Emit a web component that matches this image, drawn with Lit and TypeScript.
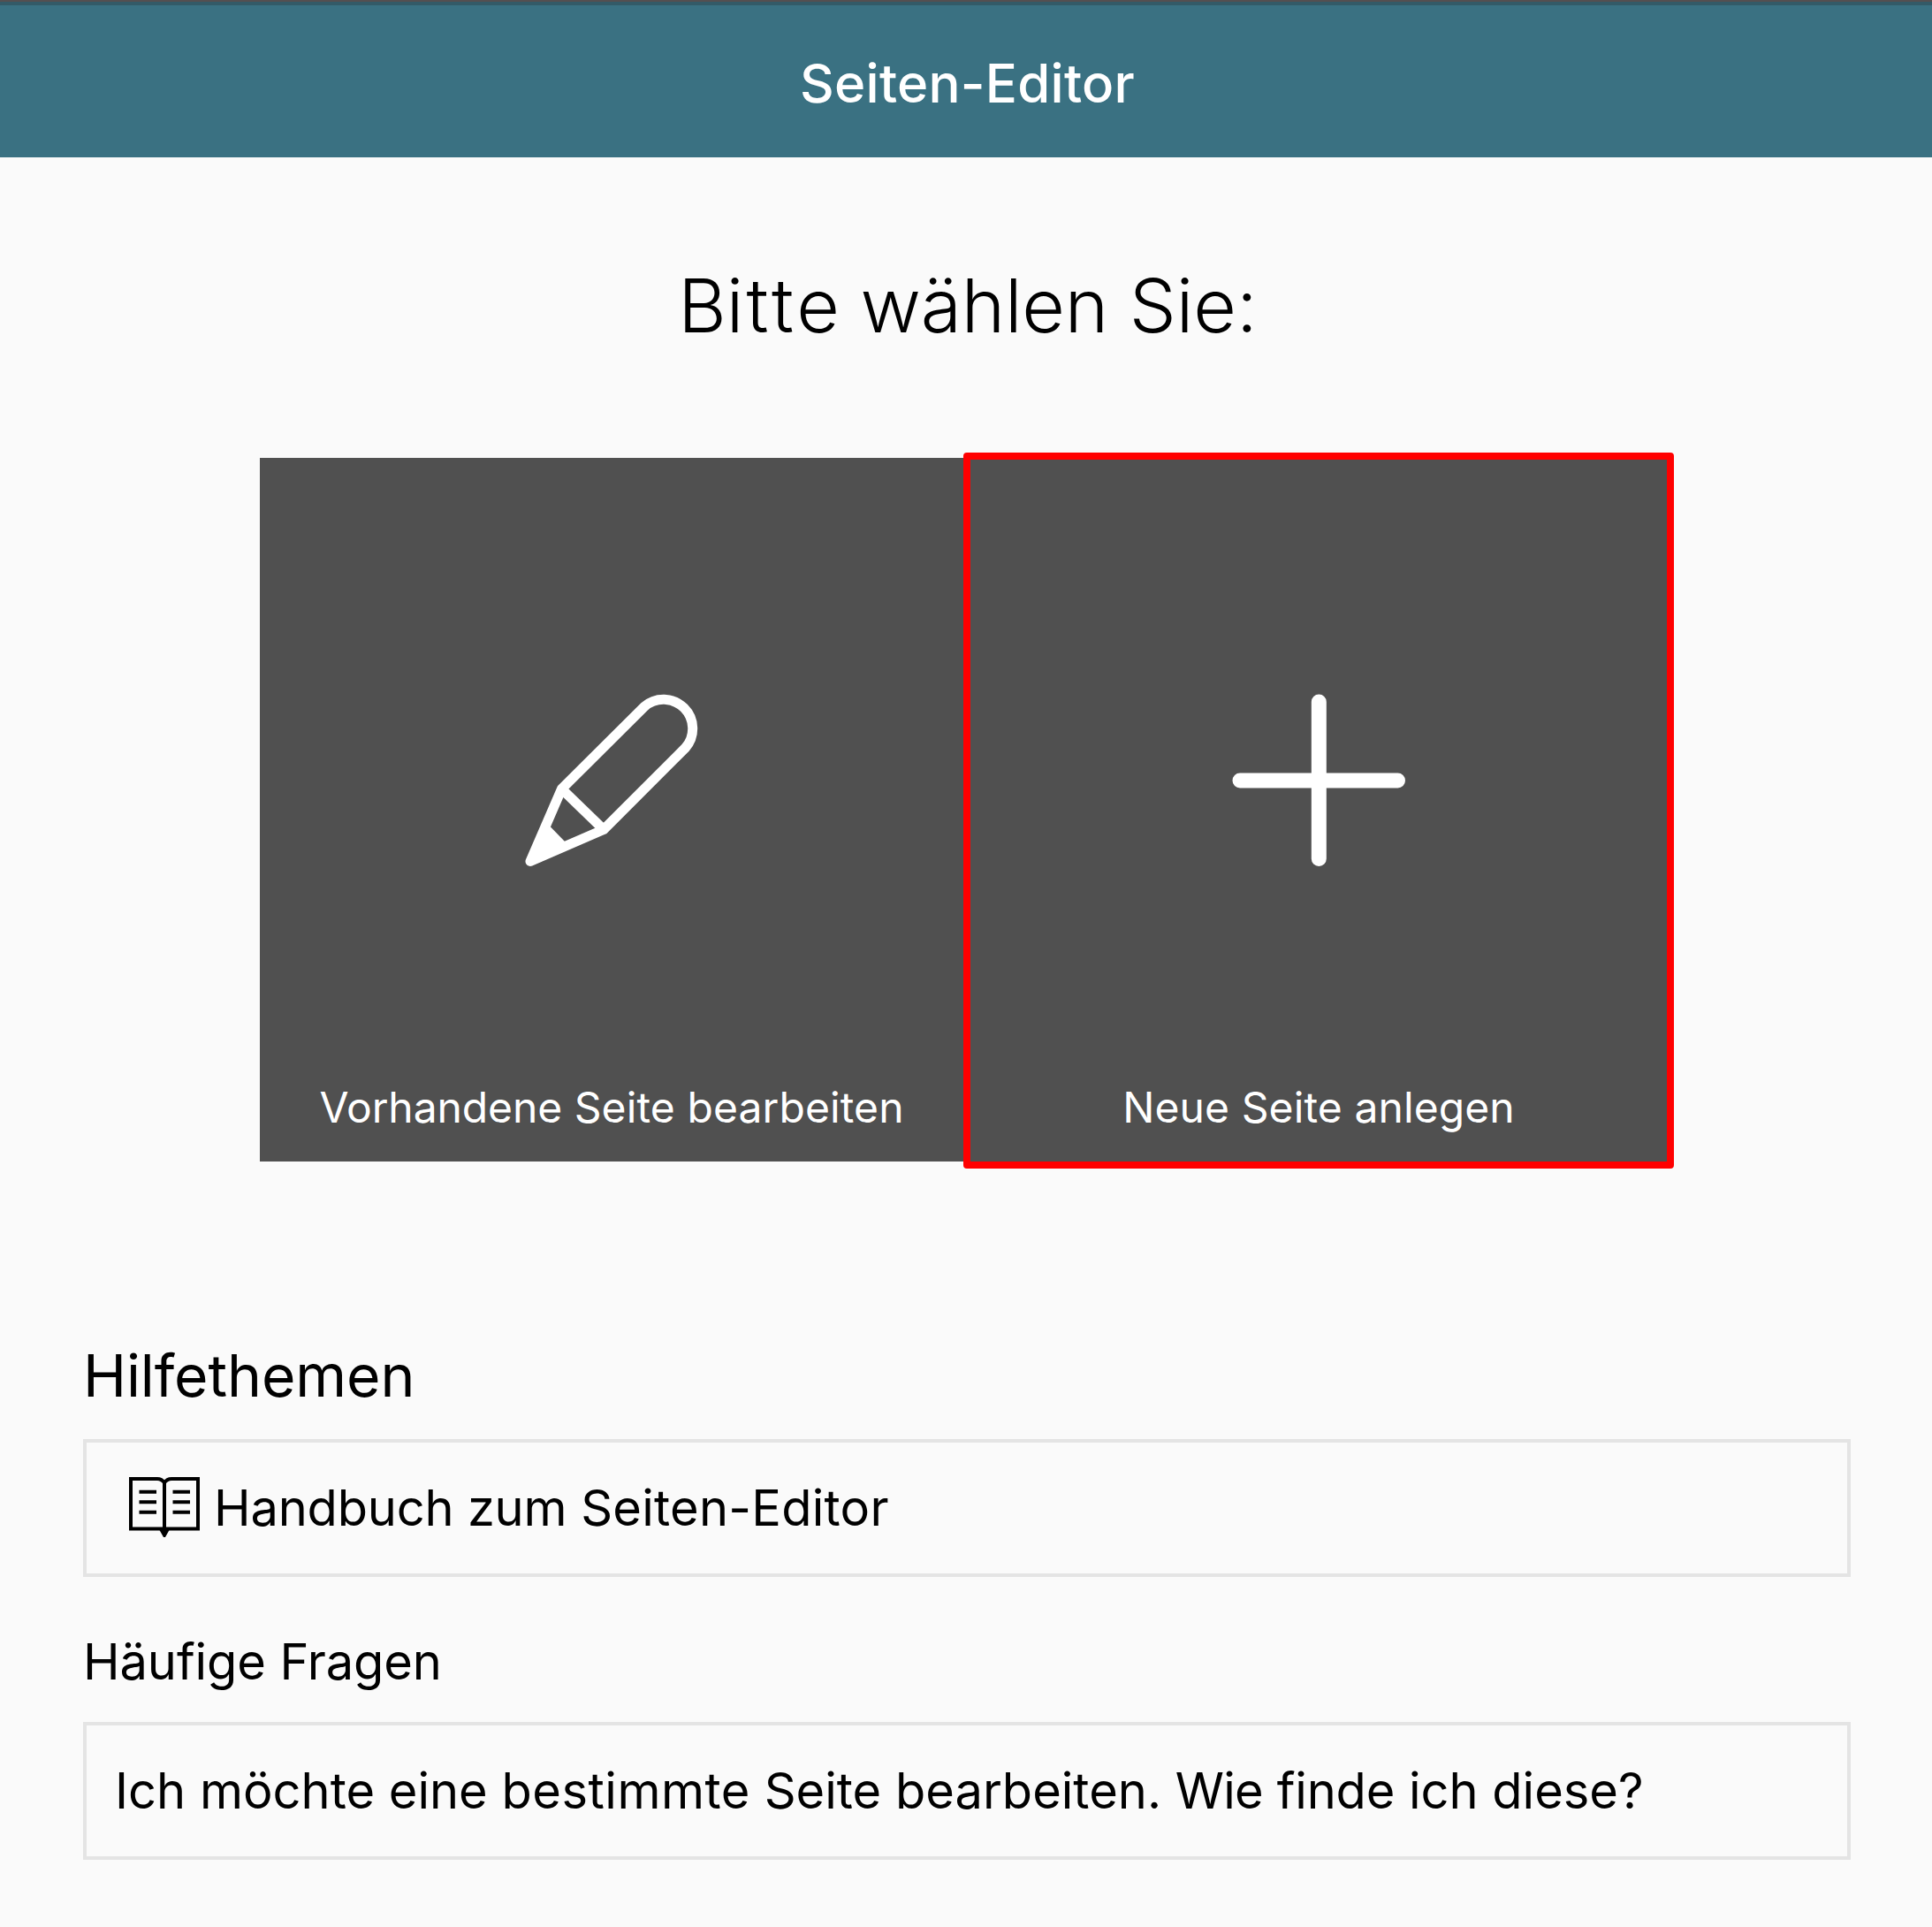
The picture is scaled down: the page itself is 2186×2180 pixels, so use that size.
import { LitElement, html, css, svg } from "lit";
import { customElement } from "lit/decorators.js";

const pencil = svg`
  <g fill="none" stroke="#fff" stroke-width="11" stroke-linejoin="round">
    <path d="M65.500 132.500L159 39.500A32.950 32.950 0 0 1 205.500 86L113 178.500L30 214.500Z" />
    <path d="M65.500 132.500L113 178.500" />
    <path d="M52 174.500L69.500 192.500L30 214.500Z" fill="#fff" stroke="none" />
  </g>`;

const plus = svg`
  <path d="M122.300 34V211.500M33 123H211.500" fill="none" stroke="#fff"
    stroke-width="17" stroke-linecap="round" />`;

const book = svg`
  <g fill="none" stroke="#000" stroke-width="4">
    <path d="M57 11.500Q54 7 49 7H19V63.500H57H95V7H65Q60 7 57 11.500V68" />
    <path d="M28.500 21.700H48M28.500 33.300H48M28.500 44.700H48M66.500 21.700H86M66.500 33.300H86M66.500 44.700H86" />
    <path d="M51.500 65H62.500L58 73H56Z" fill="#000" stroke="none" />
  </g>`;

@customElement("app-root")
export class AppRoot extends LitElement {
  static styles = css`
    :host { display: block; }
    .page {
      box-sizing: border-box; width: 100%; height: 2180px; overflow: hidden;
      background: #fafafa; color: #000;
      font-family: Inter, "Liberation Sans", sans-serif;
      display: flex; flex-direction: column;
    }
    .strip { height: 2px; background: #544f50; }
    .strip.low { height: 4px; background: #335a67; }
    header {
      height: 172px; box-sizing: border-box; padding: 52px 0 0 3px;
      background: #3a7182; color: #fff; text-align: center;
      font-size: 60px; line-height: 72px; font-weight: 500; letter-spacing: 0.25px;
    }
    h1, h2, h3 { margin: 0; white-space: nowrap; }
    h1 {
      padding: 118px 0 0 4px; text-align: center; font-kerning: none;
      font-size: 84px; line-height: 100px; font-weight: 300;
    }
    .wide { letter-spacing: 3.2px; }
    .snug { letter-spacing: -0.2px; }
    .tiles { display: flex; gap: 4px; justify-content: center; padding: 122px 2px 0 0; }
    .tile {
      position: relative; box-sizing: border-box; width: 796px; height: 796px;
      padding-top: 242px; background: #505050; color: #fff;
      display: flex; flex-direction: column; align-items: center;
    }
    .tile svg { width: 240px; height: 240px; }
    .label {
      margin-top: 223px; font-size: 48px; line-height: 60px;
      letter-spacing: 0.1px; white-space: nowrap;
    }
    .label .snug { letter-spacing: -0.1px; }
    .tile.marked::after {
      content: ""; position: absolute; left: -4px; top: -6px; right: -4px; bottom: -8px;
      border: 8px solid #f00; border-radius: 4px;
    }
    .help { padding: 202px 92px 0 94px; }
    h2 { font-size: 66px; line-height: 80px; font-weight: 400; letter-spacing: -0.1px; margin-bottom: 32px; }
    h3 { font-size: 56px; line-height: 68px; font-weight: 400; letter-spacing: -0.1px; margin: 62px 0 34px; }
    .box {
      box-sizing: border-box; height: 156px; padding-left: 32px; border: 4px solid #e4e4e4;
      display: flex; align-items: center; font-size: 56px; white-space: nowrap;
    }
    .book { width: 112px; height: 80px; flex: none; }
    .loose { letter-spacing: 0.25px; }
    .looser { letter-spacing: 0.5px; }
    .tight { letter-spacing: -0.7px; }
  `;

  render() {
    return html`<div class="page">
      <div class="strip"></div>
      <div class="strip low"></div>
      <header>Seiten-Editor</header>
      <h1>B<span class="wide">itt</span>e <span class="snug">wählen</span> Sie:</h1>
      <div class="tiles">
        <div class="tile">
          <svg viewBox="2 0 240 240">${pencil}</svg>
          <div class="label"><span class="snug">Vorhandene</span> Seite bearbeiten</div>
        </div>
        <div class="tile marked">
          <svg viewBox="2 0 240 240">${plus}</svg>
          <div class="label">Neue Seite anlegen</div>
        </div>
      </div>
      <div class="help">
        <h2>Hilfethemen</h2>
        <div class="box"><svg class="book" viewBox="1 0 112 80">${book}</svg><span><span class="snug">Handbuch zum</span> <span class="loose">Seiten-Editor</span></span></div>
        <h3>Häufige Fragen</h3>
        <div class="box"><span>Ich möchte eine <span class="looser">bestimmte</span> Seite bearbeiten. <span class="tight">Wie</span> <span class="snug">finde</span> ich diese?</span></div>
      </div>
    </div>`;
  }
}
